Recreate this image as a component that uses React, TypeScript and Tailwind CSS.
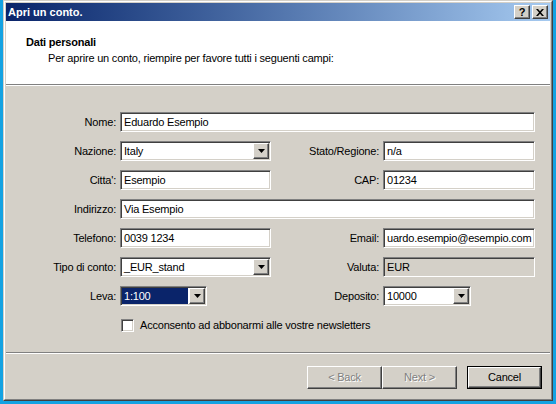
import React from 'react';

const sunken =
  'border border-t-[#808080] border-l-[#808080] border-r-white border-b-white shadow-[inset_1px_1px_0_#404040,inset_-1px_-1px_0_#d4d0c8]';
const raised =
  'border border-t-white border-l-white border-r-[#404040] border-b-[#404040] shadow-[inset_-1px_-1px_0_#808080]';

const TextBox = ({ value, className = '', disabled = false }: { value: string; className?: string; disabled?: boolean }) => (
  <div
    className={`${sunken} h-[20px] flex items-center pl-[3px] overflow-hidden whitespace-nowrap text-black ${
      disabled ? 'bg-[#d4d0c8]' : 'bg-white'
    } ${className}`}
  >
    {value}
  </div>
);

const Arrow = () => (
  <div className={`${raised} w-[16px] h-[16px] bg-[#d4d0c8] flex items-center justify-center shrink-0`}>
    <svg width="7" height="4" viewBox="0 0 7 4">
      <path d="M0 0h7L3.5 4z" fill="#000" />
    </svg>
  </div>
);

const Combo = ({ value, className = '', selected = false }: { value: string; className?: string; selected?: boolean }) => (
  <div className={`${sunken} h-[20px] bg-white p-px flex items-center ${className}`}>
    <div
      className={`flex-1 h-full flex items-center pl-[2px] mr-px whitespace-nowrap overflow-hidden ${
        selected ? 'bg-[#0a246a] text-white' : 'text-black'
      }`}
    >
      {value}
    </div>
    <Arrow />
  </div>
);

const Label = ({ children }: { children: React.ReactNode }) => (
  <div className="text-right self-center whitespace-nowrap text-black">{children}</div>
);

const Button = ({ label, disabled = false, isDefault = false }: { label: string; disabled?: boolean; isDefault?: boolean }) => {
  const inner = (
    <div
      className={`${raised} w-full h-full bg-[#d4d0c8] flex items-center justify-center ${
        disabled ? 'text-[#808080] [text-shadow:1px_1px_0_#fff]' : 'text-black'
      }`}
    >
      {label}
    </div>
  );
  if (isDefault) {
    return <div className="w-[75px] h-[23px] border border-black">{inner}</div>;
  }
  return <div className="w-[75px] h-[23px]">{inner}</div>;
};

export default function App() {
  return (
    <div className="w-[556px] h-[404px] bg-[#14a2e2] pl-[3px] font-['Liberation_Sans',Arial,sans-serif] text-[11px] leading-[13px] tracking-[-0.2px]">
      <div className="w-[550px] h-[401px] border border-t-[#d4d0c8] border-l-[#d4d0c8] border-r-[#404040] border-b-[#404040]">
        <div className="w-full h-full border border-t-white border-l-white border-r-[#808080] border-b-[#808080] bg-[#d4d0c8] p-px flex flex-col">
          {/* title bar */}
          <div className="h-[18px] bg-linear-to-r from-[#0a246a] to-[#a6caf0] flex items-center pl-[2px] pr-[2px]">
            <span className="text-white font-bold flex-1 tracking-normal">Apri un conto.</span>
            <div className="flex gap-[2px]">
              <div className={`${raised} w-[16px] h-[14px] bg-[#d4d0c8] flex items-center justify-center font-bold text-black text-[11px] leading-none`}>
                ?
              </div>
              <div className={`${raised} w-[16px] h-[14px] bg-[#d4d0c8] flex items-center justify-center`}>
                <svg width="8" height="7" viewBox="0 0 8 7">
                  <path d="M0 0h2l2 2.2L6 0h2L5 3.5 8 7H6L4 4.8 2 7H0l3-3.5z" fill="#000" />
                </svg>
              </div>
            </div>
          </div>

          {/* header */}
          <div className="h-[63px] bg-white pt-[15px] pl-[20px]">
            <div className="font-bold text-black">Dati personali</div>
            <div className="mt-[3px] pl-[22px] text-black">Per aprire un conto, riempire per favore tutti i seguenti campi:</div>
          </div>
          <div className="h-[2px] border-t border-t-[#808080] border-b border-b-white" />

          {/* form */}
          <div className="flex-1 pt-[26px]">
            <div className="grid grid-cols-[110px_151px_104px_152px] gap-x-[4px] gap-y-[9px] auto-rows-[20px]">
              <Label>Nome:</Label>
              <TextBox value="Eduardo Esempio" className="col-span-3" />

              <Label>Nazione:</Label>
              <Combo value="Italy" />
              <Label>Stato/Regione:</Label>
              <TextBox value="n/a" />

              <Label>Citta':</Label>
              <TextBox value="Esempio" />
              <Label>CAP:</Label>
              <TextBox value="01234" />

              <Label>Indirizzo:</Label>
              <TextBox value="Via Esempio" className="col-span-3" />

              <Label>Telefono:</Label>
              <TextBox value="0039 1234" />
              <Label>Email:</Label>
              <TextBox value="uardo.esempio@esempio.com" />

              <Label>Tipo di conto:</Label>
              <Combo value="_EUR_stand" />
              <Label>Valuta:</Label>
              <TextBox value="EUR" disabled />

              <Label>Leva:</Label>
              <Combo value="1:100" selected className="w-[87px]" />
              <Label>Deposito:</Label>
              <Combo value="10000" className="w-[88px]" />

              <div />
              <div className="col-span-3 flex items-center gap-[6px] pl-px">
                <div className={`${sunken} w-[13px] h-[13px] bg-white`} />
                <span className="text-black">Acconsento ad abbonarmi alle vostre newsletters</span>
              </div>
            </div>
          </div>

          {/* footer */}
          <div className="h-[2px] border-t border-t-[#808080] border-b border-b-white" />
          <div className="h-[44px] pt-[12px] pr-[8px] flex justify-end items-start">
            <Button label="< Back" disabled />
            <Button label="Next >" disabled />
            <div className="w-[10px]" />
            <Button label="Cancel" isDefault />
          </div>
        </div>
      </div>
    </div>
  );
}
